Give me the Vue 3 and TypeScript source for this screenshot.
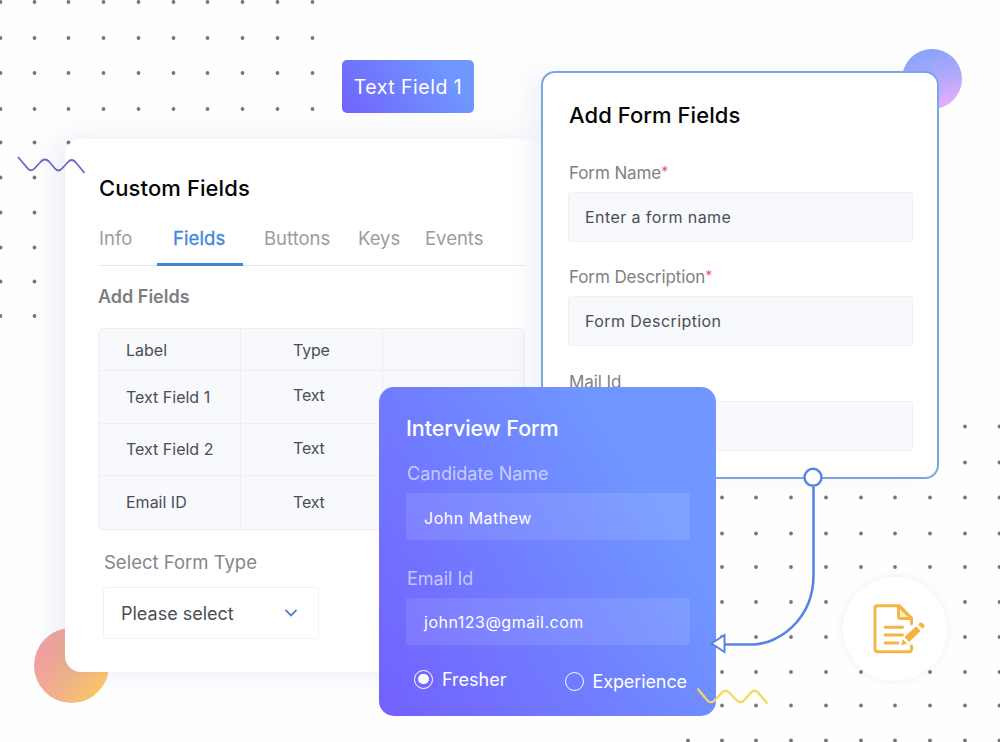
<script setup lang="ts">
import { ref } from "vue";

interface FieldRow {
  label: string;
  type: string;
}

interface FormField {
  label: string;
  value: string;
  required: boolean;
}

interface Dot {
  x: number;
  y: number;
}

const tabs = ["Info", "Fields", "Buttons", "Keys", "Events"];
const activeTab = ref("Fields");

const rows: FieldRow[] = [
  { label: "Text Field 1", type: "Text" },
  { label: "Text Field 2", type: "Text" },
  { label: "Email ID", type: "Text" },
];

const formFields: FormField[] = [
  { label: "Form Name", value: "Enter a form name", required: true },
  { label: "Form Description", value: "Form Description", required: true },
  { label: "Mail Id", value: "", required: false },
];

const candidateFields = [
  { label: "Candidate Name", value: "John Mathew" },
  { label: "Email Id", value: "john123@gmail.com" },
];

const level = ref("Fresher");
const levels = ["Fresher", "Experience"];

const grid = (xs: number[], ys: number[]): Dot[] =>
  ys.flatMap((y) => xs.map((x) => ({ x, y })));

const dots: Dot[] = [
  ...grid([0.5, 34.5, 68.5, 103.5, 138.5, 173.5, 207.5, 242.5, 277.5, 312.5], [2, 38, 73, 109]),
  ...grid([0.5, 34.5, 68.5], [142.5]),
  ...grid([0.5, 34.5], [177.5, 212.5, 247.5, 281.5, 316]),
  ...grid([965, 999.5], [426.5, 462.5]),
  ...grid(
    [722, 756, 791, 826, 861, 895, 930, 965, 999.5],
    [497.5, 533.5, 567, 602, 637, 672, 705.5, 740.5]
  ),
  { x: 688, y: 740.5 },
];
</script>

<template>
  <div class="scene">
    <svg class="dots" width="1000" height="742">
      <circle v-for="(dot, i) in dots" :key="i" :cx="dot.x" :cy="dot.y" r="1.9" />
    </svg>

    <div class="ball ball-orange"></div>
    <div class="ball ball-violet"></div>

    <section class="panel custom">
      <h2>Custom Fields</h2>
      <nav class="tabs">
        <span
          v-for="tab in tabs"
          :key="tab"
          class="tab"
          :class="[tab.toLowerCase(), { active: activeTab === tab }]"
          @click="activeTab = tab"
          >{{ tab }}</span
        >
      </nav>
      <h3>Add Fields</h3>
      <div class="table">
        <div class="row head">
          <span class="cell name">Label</span>
          <span class="cell type">Type</span>
          <span class="cell"></span>
        </div>
        <div v-for="row in rows" :key="row.label" class="row">
          <span class="cell name">{{ row.label }}</span>
          <span class="cell type">{{ row.type }}</span>
          <span class="cell"></span>
        </div>
      </div>
      <label class="select-label">Select Form Type</label>
      <div class="select">
        <span>Please select</span>
        <svg width="14" height="10" viewBox="0 0 14 10">
          <path d="M1.5 1.8 7 7.4 12.5 1.8" />
        </svg>
      </div>
    </section>

    <div class="tag">Text Field 1</div>

    <section class="panel add-form">
      <h2>Add Form Fields</h2>
      <div v-for="field in formFields" :key="field.label" class="field">
        <label>{{ field.label }}<i v-if="field.required">*</i></label>
        <div class="input">{{ field.value }}</div>
      </div>
    </section>

    <section class="panel interview">
      <h2>Interview Form</h2>
      <div v-for="field in candidateFields" :key="field.label" class="field">
        <label>{{ field.label }}</label>
        <div class="input">{{ field.value }}</div>
      </div>
      <div class="radios">
        <span
          v-for="item in levels"
          :key="item"
          class="radio"
          :class="[item.toLowerCase(), { checked: level === item }]"
          @click="level = item"
        >
          <b></b><span>{{ item }}</span>
        </span>
      </div>
    </section>

    <div class="note">
      <svg width="54" height="54" viewBox="0 0 54 54">
        <path
          class="line"
          d="M39.5 21V15L27.5 2.8H5.5Q3 2.8 3 5.3V46Q3 48.8 5.500 48.8H37Q39.5 48.8 39.5 46V43"
        />
        <path class="fold" d="M26.5 3V13.5Q26.5 15.5 28.5 15.5H39.5Z" />
        <path class="line" d="M13 24.2H30.5M13 32H30.5M13 40H26" />
        <path class="solid" d="M32 34 44 23 49 28 37 39.5Z" />
        <path class="solid" d="M30.5 35.5 35.500 40.5 28.5 43.2Z" />
        <path
          class="solid"
          d="M45.8 21.500 48 19.4Q49.2 18.500 50.2 19.5L52.500 21.8Q53.400 23 52.500 24L50.600 26.2Z"
        />
      </svg>
    </div>

    <svg class="overlay" width="1000" height="742">
      <path class="connector" d="M813.5 487V575C813.5 620 778 644.5 752 644.5H725" />
      <circle class="node" cx="813" cy="477.3" r="8.5" />
      <path class="arrow" d="M711.5 643.5 724.5 635V652Z" />
      <path
        class="wave-blue"
        d="M18 157 26.5 167Q30.5 173 35 168L41 161.5Q45 157.5 49 161.5L54.5 168Q58.5 173 62.5 168L68 162Q71.5 158 75.5 162L84.5 173"
      />
      <path
        class="wave-yellow"
        d="M697.5 688.5 707 700Q711 704.5 715 700L722 692.5Q725.5 689 729 692.5L737 700.5Q740.5 704 744 700.5L751 692.5Q754.5 689 758 692.5L767.5 703.5"
      />
    </svg>
  </div>
</template>

<style>
body {
  margin: 0;
}
</style>

<style scoped>
.scene {
  position: relative;
  width: 1000px;
  height: 742px;
  overflow: hidden;

  background: #fefefe;
  color: #4a4e54;

  font-family: "Inter", "Liberation Sans", sans-serif;
  font-size: 16px;
}

.scene * {
  box-sizing: border-box;
}

h2,
h3 {
  margin: 0;
  white-space: nowrap;
}

.dots,
.overlay {
  position: absolute;
  top: 0;
  left: 0;
}

.dots {
  fill: #77777a;
}

.overlay {
  fill: none;
  pointer-events: none;
}

.ball {
  position: absolute;
  border-radius: 50%;
}

.ball-orange {
  left: 34px;
  top: 628px;
  width: 75px;
  height: 75px;
  background: linear-gradient(110deg, #f3a0a0 15%, #f0b488 50%, #fcc568 85%);
}

.ball-violet {
  left: 902px;
  top: 49px;
  width: 60px;
  height: 60px;
  background: linear-gradient(165deg, #86a5fb 10%, #b0a8fc 50%, #dfadfb 85%);
}

.panel {
  position: absolute;
  display: flex;
  flex-direction: column;
}

h2 {
  font-size: 22px;
  font-weight: 500;
  line-height: 28px;
}

/* Custom fields */

.custom {
  left: 65px;
  top: 139px;
  width: 480px;
  height: 533px;
  padding: 35px 20px 0 33px;

  background: #fff;
  border-radius: 16px;
  box-shadow: -10px 0 28px rgba(100, 120, 190, 0.12);
}

.custom h2 {
  margin-left: 1px;

  color: #060606;
  letter-spacing: 0.1px;
}

.tabs {
  display: flex;
  width: 426px;
  height: 64px;
  margin-left: 1px;

  color: #9b9c9f;
  border-bottom: 1px solid #e4e5e9;

  font-size: 18.5px;
  line-height: 24px;
}

.tab {
  height: 64px;
  padding-top: 24px;
  cursor: pointer;
}

.tab.info {
  width: 58px;
}

.tab.fields {
  width: 86px;
  padding-left: 16px;
}

.tab.buttons {
  width: 94px;
  margin-left: 21px;
}

.tab.keys {
  width: 67px;
}

.tab.active {
  color: #4285dd;
  border-bottom: 3px solid #4283d8;
}

.tab.fields.active {
  letter-spacing: 0.1px;
  -webkit-text-stroke: 0.3px #4285dd;
}

.custom h3 {
  margin-top: 19px;

  color: #7d7e81;

  font-size: 18px;
  font-weight: 600;
  line-height: 24px;
}

.table {
  width: 427px;
  height: 202px;
  margin-top: 19px;

  background: #f8f9fd;
  border: 1px solid #eeeff4;
  border-radius: 6px;
}

.row {
  display: flex;
  height: 52.5px;
}

.row.head {
  height: 41px;
}

.row + .row {
  border-top: 1px solid #eeeff4;
}

.cell {
  display: flex;
  align-items: center;
  width: 142px;
}

.cell:first-child {
  width: 141px;
}

.cell + .cell {
  border-left: 1px solid #eeeff4;
}

.cell.name {
  padding-left: 27px;
}

.cell.type {
  padding: 0 0 3px 52px;
  letter-spacing: -0.2px;
}

.head .cell.name,
.head .cell.type {
  padding-bottom: 0;
}

.head .cell.name {
  padding-top: 1px;
}

.head .cell.type {
  padding-top: 1px;
}

.row:last-child .cell.type {
  padding-bottom: 0;
}

.select-label {
  margin: 20px 0 0 6px;

  color: #85868a;

  font-size: 18.5px;
  line-height: 24px;
}

.select {
  display: flex;
  align-items: center;
  justify-content: space-between;

  width: 216px;
  height: 52px;
  margin: 13px 0 0 5px;
  padding: 0 20px 0 17px;

  border: 1px solid #f1f2f5;
  border-radius: 3px;

  font-size: 18px;
}

.select path {
  fill: none;
  stroke: #4a82bd;
  stroke-width: 1.8;
}

/* Floating tag */

.tag {
  position: absolute;
  left: 342px;
  top: 60px;
  display: flex;
  align-items: center;
  justify-content: center;
  width: 132px;
  height: 53px;

  color: #fff;
  background: linear-gradient(55deg, #7163fd, #6f97fe 80%);
  border-radius: 5px;

  font-size: 19.5px;
  letter-spacing: 0.5px;
}

/* Add form fields */

.add-form {
  left: 541px;
  top: 71px;
  width: 398px;
  height: 408px;
  padding: 28px 24px 0 26px;

  background: #fff;
  border: 2px solid #7ba6e3;
  border-radius: 14px;
  box-shadow: -16px 0 24px -4px rgba(100, 120, 190, 0.09);
}

.add-form h2 {
  margin: 0 0 18px;
  color: #060606;
  letter-spacing: 0.05px;
}

.add-form .field {
  margin-top: 15px;
  height: 89.4px;
}

.add-form label {
  display: block;

  color: #808185;

  font-size: 17px;
  letter-spacing: -0.1px;
  line-height: 22px;
}

.add-form i {
  color: #ee5a68;

  font-size: 14px;
  font-style: normal;
  line-height: 1;
  vertical-align: 2px;
}

.add-form .input {
  display: flex;
  align-items: center;
  height: 50px;
  margin: 8px 0 0 -1px;
  padding: 0 0 1px 16px;

  background: #f7f9fd;
  border: 1px solid #f0f1f5;
  border-radius: 3px;

  letter-spacing: 0.42px;
}

/* Interview form */

.interview {
  left: 379px;
  top: 387px;
  width: 337px;
  height: 329px;
  padding: 27px 26px 0 27px;

  color: #fff;
  background: linear-gradient(58deg, #7360fe 0%, #7080ff 45%, #7096ff 75%, #7096ff 100%);
  border-radius: 15px;
}

.interview h2 {
  font-size: 21.5px;
  letter-spacing: -0.05px;
}

.interview .field {
  height: 84.500px;
  margin-top: 20px;
}

.interview label {
  display: block;
  padding-left: 1px;

  color: rgba(255, 255, 255, 0.62);

  font-size: 18px;
  line-height: 24px;
}

.interview .input {
  display: flex;
  align-items: center;
  height: 47px;
  margin-top: 7px;
  padding: 2px 0 0 18px;

  background: rgba(255, 255, 255, 0.1);
  border-radius: 2px;

  letter-spacing: 0.5px;
}

.radios {
  display: flex;
  justify-content: space-between;
  margin-top: 16px;
  padding: 0 3px 0 8px;

  font-size: 18px;
}

.radio {
  display: flex;
  align-items: center;
  gap: 9px;
  height: 24px;
}

.radio.experience {
  margin-top: 2px;
  letter-spacing: -0.1px;
}

.radio b {
  width: 19px;
  height: 19px;
  padding: 3.1px;

  border: 1.4px solid #fff;
  border-radius: 50%;
}

.radio.checked b::after {
  content: "";
  display: block;
  width: 10.8px;
  height: 10.8px;

  background: #fff;
  border-radius: 50%;
}

/* Note badge */

.note {
  position: absolute;
  left: 843px;
  top: 577px;
  display: flex;
  width: 104px;
  height: 104px;
  padding: 26px 0 0 29px;

  background: #fff;
  border-radius: 50%;
  box-shadow: 0 0 9px rgba(60, 60, 70, 0.08);
}

.note .line,
.note .fold {
  fill: none;
  stroke: #f5b544;
  stroke-width: 2.9;
  stroke-linecap: round;
  stroke-linejoin: round;
}

.note .fold {
  fill: #fdebc4;
}

.note .solid {
  fill: #f5b23c;
  stroke: #fff;
  stroke-width: 0.8;
}

/* Lines drawn over the panels */

.connector {
  stroke: #5784e4;
  stroke-width: 2.6;
}

.node {
  fill: #fff;
  stroke: #5784dc;
  stroke-width: 2.4;
}

.arrow {
  fill: #fff;
  stroke: #5287dc;
  stroke-width: 2;
}

.wave-blue {
  stroke: #6c66c0;
  stroke-width: 1.8;
}

.wave-yellow {
  stroke: #f5d75a;
  stroke-width: 2.2;
}
</style>
